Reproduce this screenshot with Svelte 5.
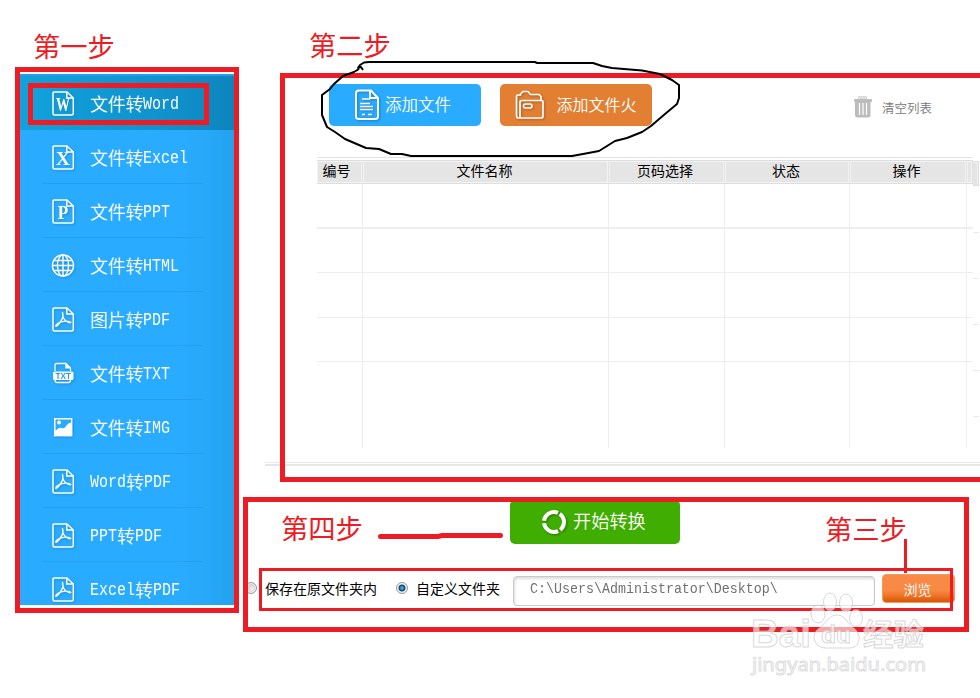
<script>
  const menu = [
    { icon: 'W', parts: ['文件转', 'Word'], active: true },
    { icon: 'X', parts: ['文件转', 'Excel'] },
    { icon: 'P', parts: ['文件转', 'PPT'] },
    { icon: 'globe', parts: ['文件转', 'HTML'] },
    { icon: 'pdf', parts: ['图片转', 'PDF'] },
    { icon: 'txt', parts: ['文件转', 'TXT'] },
    { icon: 'img', parts: ['文件转', 'IMG'] },
    { icon: 'pdf', parts: ['Word', '转', 'PDF'] },
    { icon: 'pdf', parts: ['PPT', '转', 'PDF'] },
    { icon: 'pdf', parts: ['Excel', '转', 'PDF'] }
  ];
  const columns = [
    { title: '编号', width: 46, pad: 7 },
    { title: '文件名称', width: 246, pad: 3 },
    { title: '页码选择', width: 116, pad: 4 },
    { title: '状态', width: 125, pad: 3 },
    { title: '操作', width: 117, pad: 4 },
    { title: '', width: 6 }
  ];
  const rowHeights = [45, 44, 45, 44, 86];
  const isLatin = (s) => /^[A-Z]/i.test(s);
</script>

<div class="page">
  <nav class="sidebar">
    {#each menu as item}
      <div class="item" class:active={item.active}>
        <svg class="icon" viewBox="0 0 26 28" width="26" height="28">
          {#if item.icon === 'globe'}
            <g fill="none" stroke="#fff" stroke-width="1.4">
              <circle cx="13" cy="14.500" r="10.6" />
              <ellipse cx="13" cy="14.500" rx="5.6" ry="10.6" />
              <path d="M13 3.900v21.2M2.4 14.500h21.2M4 9.500h18M4 19.500h18" />
            </g>
          {:else if item.icon === 'txt'}
            <path d="M5 12V6.500Q5 4.500 7 4.500H16L20.500 9V12M5 20V21Q5 23.500 7 23.500H18.500Q20.500 23.500 20.500 21V20" fill="none" stroke="#fff" stroke-width="1.300" />
            <path d="M15.300 4.500V9.500H21Z" fill="#fff" />
            <rect x="3" y="12.500" width="20.500" height="8.500" rx="1.500" fill="#fff" />
            <text x="13.200" y="20" text-anchor="middle" textLength="15.500" lengthAdjust="spacingAndGlyphs" font-size="9" font-weight="bold" fill="#2b9cea">TXT</text>
          {:else if item.icon === 'img'}
            <rect x="4.700" y="5.700" width="17" height="17" fill="#fff" stroke="#fff" stroke-width="1.400" />
            <path d="M5.500 6.500H21V9.500Q18 10 16.500 12.500Q14.500 16 11.500 15Q9.500 14 8 15.700L5.500 17.500Z" fill="#29abff" />
            <circle cx="9" cy="9.500" r="2" fill="#fff" />
          {:else}
            <path d="M4 3H17L23.300 9V24.500Q23.300 26 21.800 26H4.500Q3 26 3 24.500V4Q3 3 4 3Z" fill="none" stroke="#fff" stroke-width="1.500" />
            <path d="M16.800 3V9H23.300" fill="none" stroke="#fff" stroke-width="1.500" />
            {#if item.icon === 'pdf'}
              <path d="M12.500 7.500C14.500 11.500 11.800 15 9.800 17.800C8.300 20 6.500 21.800 5.800 21.300C5.300 20 8 18 11.300 16.800C14.500 15.800 18 15.700 20.800 17.300C20.500 18.400 17.200 17.300 15.200 15.300C13.200 13.500 12.700 11 12.500 7.500Z" fill="none" stroke="#fff" stroke-width="1.300" stroke-linejoin="round" />
            {:else}
              <text class="letter" x="13" y="22" text-anchor="middle" textLength={item.icon === 'P' ? 10.5 : 14} lengthAdjust="spacingAndGlyphs">{item.icon}</text>
            {/if}
          {/if}
        </svg>
        <div class="label">
          {#each item.parts as part}
            {#if isLatin(part)}<span class="latin" style="width: {part.length * 9}px">{part}</span>{:else}<span>{part}</span>{/if}
          {/each}
        </div>
      </div>
    {/each}
  </nav>

  <main>
    <div class="toolbar">
      <div class="button add-file">
        <svg width="26" height="34" viewBox="0 0 26 34">
          <path d="M5 2.500H17L24 10V28.500Q24 31 21 31H5Q2 31 2 28.500V5.500Q2 2.500 5 2.500Z" fill="none" stroke="#fff" stroke-width="2" />
          <path d="M16 3V10H24" fill="none" stroke="#fff" stroke-width="1.800" />
          <path d="M8 11H16M6 15.500H16M6 18.500H19M6 21.500H19M8 26.500H11M14 26.500H18" stroke="#fff" stroke-width="1.500" />
        </svg>
        <span>添加文件</span>
      </div>
      <div class="button add-folder">
        <svg width="30" height="30" viewBox="0 0 30 30" fill="none" stroke="#fff" stroke-width="1.700">
          <path d="M1.500 25V6.500Q1.500 5 3 5H5.500V4L8 1.500H13L15.500 4.500H24L26 6.500V10" />
          <path d="M5 27.500V12Q5 10.500 7 10.500H26Q28 10.500 28 12V26Q28 28 26 28H3Q1.500 28 1.500 25" />
          <rect x="8.500" y="14" width="8.500" height="4" rx="2" stroke-width="1.500" />
        </svg>
        <span>添加文件火</span>
      </div>
      <div class="clear">
        <svg width="20" height="24" viewBox="0 0 20 24">
          <path d="M5 1H14V4H5Z" fill="#ddd" />
          <rect x="1" y="4" width="18" height="3" rx="1" fill="#bcbcbc" />
          <path d="M2 7H17.500V20Q17.500 22.500 15 22.500H4.500Q2 22.500 2 20Z" fill="#bcbcbc" />
          <path d="M6.500 8V20M10 8V20M13.500 8V20" stroke="#fff" stroke-width="1.200" />
        </svg>
        <span>清空列表</span>
      </div>
    </div>

    <div class="list">
      <div class="table">
        <div class="head">
          {#each columns as col}
            <div class="th" style="width: {col.width}px; padding-right: {col.pad ?? 0}px"><span>{col.title}</span></div>
          {/each}
        </div>
        {#each rowHeights as height}
          <div class="row" style="height: {height}px">
            {#each columns as col}<i style="width: {col.width}px"></i>{/each}
          </div>
        {/each}
      </div>
      <div class="edge"><div class="edge-head"></div>{#each [0, 1, 2, 3, 4] as n}<i></i>{/each}</div>
    </div>
    <div class="rule"></div>

    <div class="start">
      <svg width="26" height="26" viewBox="0 0 26 26">
        <circle cx="13" cy="13" r="10" fill="none" stroke="#fff" stroke-width="4" stroke-dasharray="18.500 2.444" transform="rotate(-55 13 13)" />
      </svg>
      <span>开始转换</span>
    </div>

    <div class="target">
      <span class="radio"></span>
      <span class="choice first">保存在原文件夹内</span>
      <span class="radio on"></span>
      <span class="choice second">自定义文件夹</span>
      <div class="path"><span>C:\Users\Administrator\Desktop\</span></div>
      <div class="browse">浏览</div>
    </div>
  </main>

  <svg class="notes" width="980" height="698" viewBox="0 0 980 698">
    <g fill="none" stroke="#ed1c24" stroke-width="5">
      <rect x="17.500" y="69.500" width="219" height="541" />
      <rect x="30.500" y="85.500" width="176" height="37" />
      <path d="M985 75.500H282.500V479.500H985" />
      <rect x="245.500" y="499.500" width="721" height="130" />
      <rect x="260.500" y="569.500" width="691" height="40" stroke-width="3" />
      <path d="M380.500 536.500H438L442 535.500H500.500" stroke-linecap="round" />
      <path d="M905.500 539V573" stroke-width="3" />
    </g>
    <path d="M363 70L361 67L358 68L360 65L364 62.500L369 62H535L537 63H593L602 66L612 68L642 70.500L660 74L672 80L679 85V98L677 104L665 114L651 126L642 132L627 138L615 141L599 151L583 154L572 156H411L402 154H391L379 149L366 148L345 139L335 132L327 127L322 115V95L330 89L334 84L343 76L354 72L359 69" fill="none" stroke="#000" stroke-width="2" stroke-linejoin="round" />
    <g class="steps">
      <text x="33" y="57">第一步</text>
      <text x="309" y="56">第二步</text>
      <text x="281" y="539">第四步</text>
      <text x="825" y="540">第三步</text>
    </g>
    <g class="mark">
      <text x="751" y="647" font-size="39" font-weight="bold" textLength="60" lengthAdjust="spacingAndGlyphs">Bai</text>
      <ellipse cx="818" cy="614" rx="7" ry="9" />
      <ellipse cx="830" cy="602" rx="6.500" ry="9" />
      <ellipse cx="846" cy="603" rx="6.500" ry="9" />
      <ellipse cx="856" cy="618" rx="6.500" ry="8.500" />
      <path d="M837 615C828 615 826 624 818 629C810 636 815 648 826 648H849C860 648 862 636 855 629C847 624 846 615 837 615Z" />
      <text x="821" y="643" font-size="24" font-weight="bold" textLength="30" lengthAdjust="spacingAndGlyphs">du</text>
      <text x="863" y="645" font-size="30" font-weight="bold" textLength="61" lengthAdjust="spacingAndGlyphs">经验</text>
      <text class="url" x="752" y="671" font-size="18.500" textLength="174" lengthAdjust="spacingAndGlyphs">jingyan.baidu.com</text>
    </g>
  </svg>
</div>

<style>
  :global(body) { background: #fff; }
  .page, .page * { box-sizing: border-box; }
  .page {
    position: relative; width: 980px; height: 698px; display: flex; overflow: hidden;
    background: #fff; font-family: "Liberation Sans", "Noto Sans CJK SC", sans-serif; white-space: nowrap;
  }
  .sidebar {
    width: 214px; height: 531px; margin: 74px 0 0 20px; overflow: hidden; flex: none;
    background: linear-gradient(90deg, #29abff 0 74%, #27a8f8 88%, #23a2ec);
    border-top: 2px solid #289cec;
  }
  .item { height: 54px; display: flex; align-items: center; padding-left: 30px; position: relative; }
  .item:not(.active)::after { content: ""; position: absolute; left: 22px; bottom: 0; width: 161px; height: 1px; background: #239fef; }
  .active { background: linear-gradient(90deg, #10a2dc, #1091cc 70%, #0d84bc); }
  .icon { flex: none; filter: drop-shadow(1px 1px 1px #1278b080); font-family: "Liberation Sans", sans-serif; }
  .letter { font: bold 18px "Liberation Serif", serif; fill: #fff; }
  .label { display: flex; height: 24px; margin: -1px 0 0 14px; color: #fff; font: 350 17.800px/24px "Noto Sans CJK SC", sans-serif; }
  .latin { display: block; font-family: "Liberation Mono", monospace; font-size: 17.500px; line-height: 26px; transform: scaleX(.857); transform-origin: 0 50%; }

  main { position: relative; flex: none; width: 746px; padding: 84px 0 0 11px; }
  .toolbar { display: flex; height: 73px; padding-left: 84px; }
  .button { width: 152px; height: 42px; border-radius: 5px; display: flex; align-items: center; color: #fff; font: 350 16.500px "Noto Sans CJK SC", sans-serif; }
  .button svg { flex: none; filter: drop-shadow(1px 1px 1px #0004); }
  .button span { margin-top: -3px; }
  .add-file { background: #29abff; padding-left: 24.500px; gap: 5.500px; }
  .add-folder { background: #e27f32; margin-left: 19px; padding-left: 15px; gap: 11.500px; font-size: 16px; }
  .clear { display: flex; align-items: center; height: 46px; margin-left: 201px; gap: 9px; color: #777; font: 350 12.500px "Noto Sans CJK SC", sans-serif; }
  .list { display: flex; height: 305px; margin-left: 72px; }
  .table { width: 656px; border-top: 1px solid #e2e2e2; padding-top: 2px; overflow: hidden; height: 291px; }
  .head { display: flex; height: 24px; background: #e5e5e5; border-top: 1px solid #dedede; border-bottom: 1px solid #dedede; }
  .th { flex: none; height: 22px; border: 1px solid #f3f3f3; border-right-color: #e0e0e0; box-shadow: inset -1px 0 #f3f3f3; text-align: center; color: #000; font: 14px/17px "Noto Sans CJK SC", sans-serif; }
  .row { display: flex; border-bottom: 1px solid #eee; }
  .row:nth-child(2) { border-bottom: 2px solid #eee; }
  .row:last-child { border: 0; }
  .row i { flex: none; border-right: 1px solid #eee; }
  .row i:last-child { border: 0; }
  .edge { width: 6px; padding-top: 4px; }
  .edge-head { height: 25px; background: #e5e5e5; border: 1px solid #ddd; border-left: 0; margin-bottom: 46px; box-shadow: inset -1px 1px #f3f3f3; }
  .edge i { display: block; height: 46px; border-top: 1px solid #eaeaea; }
  .rule { height: 4px; margin-left: 20px; width: 715px; border-top: 1px solid #eaeaea; border-bottom: 2px solid #e6e6e6; }
  .start { width: 170px; height: 44px; margin: 34px 0 0 265px; border-radius: 5px; background: #3fae00; display: flex; align-items: center; padding: 0 0 0 31px; gap: 6px; color: #fff; font: 350 18.200px "Noto Sans CJK SC", sans-serif; }
  .start span { margin-top: -4px; }
  .start svg { filter: drop-shadow(1px 1px 1px #0005); }
  .target { display: flex; height: 34px; margin-top: 30px; align-items: flex-start; font: 14px/20px "Noto Sans CJK SC", sans-serif; color: #000; }
  .radio { width: 12px; height: 12px; border-radius: 50%; border: 1px solid #999; margin: 8px 0 0 0; background: radial-gradient(circle at 60% 60%, #eee, #bbb); box-shadow: inset 0 0 0 1px #f3f3f3; flex: none; }
  .radio.on { margin-left: 19px; background: radial-gradient(circle, #31a8df 0 1px, #123d60 3px, #eee 4px); }
  .choice { margin-top: 4px; flex: none; }
  .first { width: 112px; margin-left: 8px; }
  .second { width: 84px; margin-left: 8px; }
  .path { width: 362px; height: 30px; margin: 2px 0 0 13px; border: 1px solid #c9c9c9; border-radius: 4px; box-shadow: inset 1px 2px 3px #ddd; padding: 4px 15.500px; color: #707070; font: 15px/18px "Liberation Mono", monospace; }
  .path span { display: block; transform: scaleX(.888); transform-origin: 0 50%; }
  .browse { width: 73px; height: 29px; margin: 0 0 0 7px; border-radius: 4px; text-align: center; border: 1px solid #f39a62; background: linear-gradient(#f88a45 55%, #ee772b 75%, #d85600); color: #fff; font: 350 14px/29px "Noto Sans CJK SC", sans-serif; padding-right: 2px; }
  .notes { position: absolute; left: 0; top: 0; }
  .steps { fill: #ed1c24; font: 400 27.300px "Noto Sans CJK SC", sans-serif; }
  .mark { fill: #fff; fill-opacity: .6; stroke: #bdbdbd; stroke-opacity: .6; stroke-width: 1; font-family: "Liberation Sans", "Noto Sans CJK SC", sans-serif; }
  .url { font-family: "Noto Sans", sans-serif; stroke: #c8c8c8; }
</style>
